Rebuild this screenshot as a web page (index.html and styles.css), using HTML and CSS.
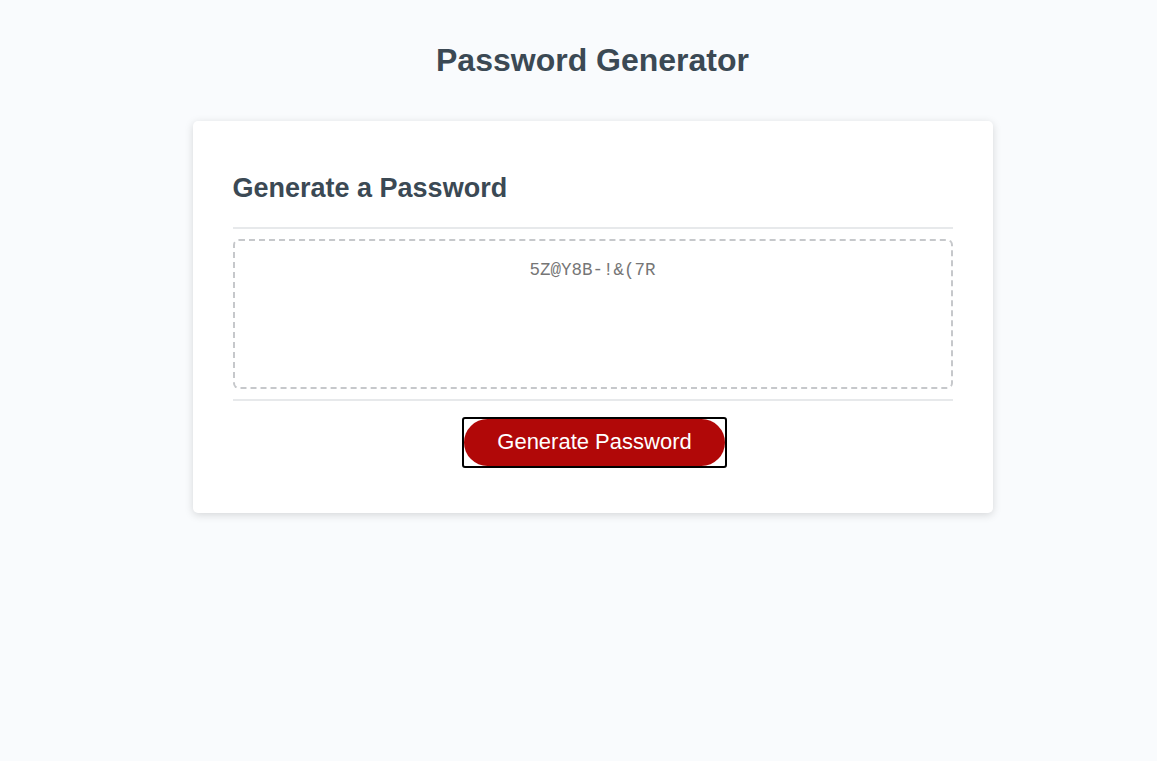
FILE: index.html
```html
<!DOCTYPE html>
<html lang="en">
<head>
<meta charset="UTF-8">
<title>Password Generator</title>
<link rel="stylesheet" href="styles.css">
</head>
<body>
<div class="wrapper">
  <header class="page-header">
    <h1>Password Generator</h1>
  </header>
  <div class="card">
    <div class="card-header">
      <h2>Generate a Password</h2>
    </div>
    <div class="card-body">
      <textarea readonly id="password" class="password" aria-label="Generated Password">5Z@Y8B-!&amp;(7R</textarea>
    </div>
    <div class="card-footer">
      <span class="focus-ring"><button class="btn" id="generate">Generate Password</button></span>
    </div>
  </div>
</div>
</body>
</html>
```
FILE: styles.css
```css
* { box-sizing: border-box; }

html, body {
  margin: 0;
  padding: 0;
  height: 100%;
}

body {
  background-color: #f9fbfd;
  font-family: "Liberation Sans", Arial, sans-serif;
}

.wrapper {
  padding: 0 20px 0 48px;
}

.page-header {
  text-align: center;
  padding: 42px 20px 42px;
  color: #3b4954;
}

.page-header h1 {
  margin: 0;
  font-size: 32px;
  line-height: 37px;
  font-weight: bold;
}

.card {
  background-color: #fff;
  border-radius: 5px;
  box-shadow: rgba(0, 0, 0, 0.15) 0 2px 8px 0;
  color: #3b4954;
  font-size: 18px;
  margin: 0 auto;
  max-width: 800px;
  padding: 30px 40px;
}

.card-header h2 {
  margin: 22px 0 22.5px;
  font-size: 27px;
  line-height: 31px;
  font-weight: bold;
}

.card-header::after,
.card-footer::before {
  content: "";
  display: block;
  width: 100%;
  height: 2px;
  background: #e7e9eb;
}

.card-body {
  min-height: 100px;
}

.password {
  display: block;
  width: 100%;
  height: 150px;
  margin: 10px 0;
  padding: 18px 15px 0;
  border: 2px dashed #c6c8cb;
  border-radius: 6px;
  resize: none;
  overflow: hidden;
  text-align: center;
  font-family: "Liberation Mono", "DejaVu Sans Mono", monospace;
  font-size: 17.5px;
  line-height: 22px;
  color: #767676;
  background: #fff;
  outline: none;
}

.card-footer {
  text-align: center;
}

.focus-ring {
  display: inline-block;
  margin: 16px 16px 15px 20px;
  border: 2px solid #000;
  border-radius: 3px;
  line-height: 0;
  vertical-align: top;
}

.btn {
  border: none;
  background-color: #b10808;
  border-radius: 25px;
  color: #fff;
  display: inline-block;
  font-family: "Liberation Sans", Arial, sans-serif;
  font-size: 22px;
  line-height: 22px;
  margin: 0;
  padding: 12.5px 33px;
  text-align: center;
  cursor: pointer;
}
```
